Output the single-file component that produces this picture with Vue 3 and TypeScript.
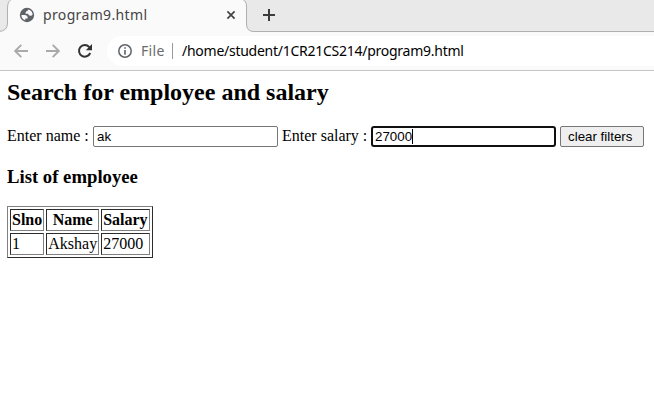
<script setup lang="ts">
import { ref } from 'vue'

interface Employee {
  slno: number
  name: string
  salary: number
}

const name = ref('ak')
const salary = ref('27000')
const employees = ref<Employee[]>([{ slno: 1, name: 'Akshay', salary: 27000 }])

function clearFilters(): void {
  name.value = ''
  salary.value = ''
}
</script>

<template>
  <div class="window">
    <header class="tabstrip">
      <svg class="tab-shape" width="654" height="32" viewBox="0 0 654 32">
        <path class="tab-fill" d="M0 32V31.5Q7.5 31 7.5 23V8Q7.5 0 12 -1H242Q246.5 1 246.5 6V24Q246.5 31.5 254 31.5H654V32Z" />
        <path class="strip-fill" d="M242 -1Q246.5 1 246.5 6V24Q246.5 31.5 254 31.5H655V-1Z" />
        <path class="strip-line" d="M-1 31.5Q7.5 31 7.5 23V8Q7.5 1 12 -1M242 -1Q246.5 1 246.5 6V24Q246.5 31.5 254 31.5H655" />
      </svg>
      <div class="tab">
        <svg class="globe" width="16" height="16" viewBox="0.6 0.6 22.8 22.8">
          <circle cx="12" cy="12" r="10.2" fill="#5f6368" />
          <path d="M4 12h4.4c3.407.022 4.922 1.73 4.543 5.127H9.488v2.47A8 8 0 0 1 4 12ZM13.727 4.188A8 8 0 0 1 19.986 11.514C19.327 12.504 18.332 13 17 13c-2.137 0-3.206-.916-3.206-2.75h-3.748c-.274-2.728.683-4.092 2.87-4.092 0-.975.327-1.597.811-1.97Z" fill="#fafafa" />
        </svg>
        <span class="tab-title">program9.html</span>
        <svg class="close" width="10" height="10" viewBox="0 0 10 10"><path d="M1.4 1.4 8.6 8.6M8.6 1.4 1.4 8.6" /></svg>
      </div>
      <svg class="plus" width="12" height="12" viewBox="0 0 12 12"><path d="M6 0V12M0 6H12" /></svg>
    </header>
    <nav class="toolbar">
      <svg class="arrow" width="14" height="14" viewBox="0 0 14 14"><path d="M14 7H1.5M7.3 .8 1.2 7 7.3 13.2" /></svg>
      <svg class="arrow forward" width="14" height="14" viewBox="0 0 14 14"><path d="M0 7H12.5M6.7 .8 12.8 7 6.7 13.2" /></svg>
      <svg class="reload" width="16" height="16" viewBox="0 0 16 16">
        <path d="M13.2 10A5.8 5.8 0 1 1 12.1 3.9L13.6 5.4" fill="none" stroke="#333" stroke-width="2" />
        <path d="M15 1V7.2H8.8Z" fill="#333" />
      </svg>
      <div class="address">
        <svg class="info" width="14" height="14" viewBox="0 0 14 14">
          <circle cx="7" cy="7" r="6.2" fill="none" stroke="#5f6368" stroke-width="1.5" />
          <path d="M7 3.2V4.8M7 6.1V10.8" stroke="#5f6368" stroke-width="1.6" />
        </svg>
        <span class="scheme">File</span>
        <span class="divider"></span>
        <span class="url">/home/student/1CR21CS214/program9.html</span>
      </div>
    </nav>
    <main class="page">
      <h2>Search for employee and salary</h2>
      <div class="filters">
        <label for="name" class="name-label">Enter name :</label>
        <input id="name" v-model="name" type="text" />
        <label for="salary" class="salary-label">Enter salary :</label>
        <div class="focused">
          <input id="salary" v-model="salary" type="text" />
          <span class="caret"></span>
        </div>
        <button type="button" @click="clearFilters">clear filters</button>
      </div>
      <h3>List of employee</h3>
      <table border="1">
        <thead>
          <tr><th>Slno</th><th>Name</th><th>Salary</th></tr>
        </thead>
        <tbody>
          <tr v-for="e in employees" :key="e.slno">
            <td>{{ e.slno }}</td><td>{{ e.name }}</td><td>{{ e.salary }}</td>
          </tr>
        </tbody>
      </table>
    </main>
  </div>
</template>

<style>
body {
  background: #fff;
  overflow: hidden;
}
</style>

<style scoped>
.window {
  width: 654px;
  height: 406px;
  overflow: hidden;
  background: #fff;
  color: #000;
  font: 16px/18px "Liberation Serif", serif;
}
.window svg {
  display: block;
  flex: none;
}
.tabstrip {
  position: relative;
  display: flex;
  height: 32px;
  background: #e9e9e9;
  font-family: "Noto Sans", sans-serif;
}
.tab-shape {
  position: absolute;
  inset: 0;
}
.tab-fill { fill: #fafafa; }
.strip-fill { fill: #e9e9e9; }
.strip-line { fill: none; stroke: #b0b0b0; }
.tab {
  position: relative;
  box-sizing: border-box;
  display: flex;
  align-items: center;
  width: 247px;
  height: 30px;
  padding-left: 19px;
}
.tab-title {
  width: 104px;
  margin-left: 8px;
  color: #444;
  font-size: 14px;
  letter-spacing: 0.35px;
  white-space: nowrap;
}
.close {
  margin-left: 79px;
  stroke: #444;
  stroke-width: 1.7;
}
.plus {
  position: relative;
  margin: 9px 0 0 16px;
  stroke: #3c3c3c;
  stroke-width: 2;
}
.toolbar {
  box-sizing: border-box;
  display: flex;
  align-items: center;
  height: 39px;
  padding-left: 14px;
  border-bottom: 1px solid #c6c6c6;
  background: #fafafa;
}
.arrow {
  fill: none;
  stroke: #aaa;
  stroke-width: 1.9;
}
.forward { margin-left: 18px; }
.reload { margin-left: 17px; }
.address {
  box-sizing: border-box;
  display: flex;
  flex: 1;
  align-items: center;
  height: 30px;
  margin-left: 14px;
  padding-left: 11px;
  border-radius: 15px 0 0 15px;
  background: #fff;
  font: 14px/18px "Noto Sans", sans-serif;
}
.scheme {
  width: 24px;
  margin-left: 9px;
  color: #6b6b6b;
  letter-spacing: 0.3px;
}
.divider {
  width: 1px;
  height: 16px;
  margin-left: 7px;
  background: #999;
}
.url {
  margin-left: 9px;
  white-space: nowrap;
  letter-spacing: -0.26px;
}
.page { padding: 8px 0 0 7px; }
h2 {
  margin: 0;
  font-size: 24px;
  line-height: 27px;
}
.filters {
  display: flex;
  height: 21px;
  margin-top: 20px;
  line-height: 20px;
  white-space: nowrap;
}
.name-label { width: 86px; }
.salary-label {
  width: 85px;
  margin-left: 4px;
}
input {
  display: block;
  box-sizing: border-box;
  width: 185px;
  height: 21px;
  margin: 0;
  padding: 1px 3px;
  border: 1px solid #767676;
  border-radius: 2px;
  outline: 0;
  background: #fff;
  color: #000;
  font: 13.333px "Liberation Sans", sans-serif;
}
.focused {
  position: relative;
  margin-left: 4px;
}
.focused input {
  padding: 0 2px;
  border: 2px solid #101010;
  border-radius: 3px;
}
.caret {
  position: absolute;
  top: 3px;
  left: 41px;
  width: 1px;
  height: 15px;
  background: #000;
}
button {
  box-sizing: border-box;
  width: 84px;
  height: 21px;
  margin: 0 0 0 4px;
  padding: 1px 7px;
  border: 1px solid #767676;
  border-radius: 2px;
  background: #efefef;
  color: #000;
  font: 13.333px "Liberation Sans", sans-serif;
  text-align: left;
  white-space: nowrap;
}
h3 {
  margin: 19px 0 0;
  font-size: 18.72px;
  line-height: 21px;
}
table {
  margin-top: 19px;
  border: 1px outset #808080;
  border-spacing: 2px;
}
th,
td {
  height: 18px;
  padding: 1px;
  border: 1px inset #808080;
  line-height: 18px;
}
</style>
